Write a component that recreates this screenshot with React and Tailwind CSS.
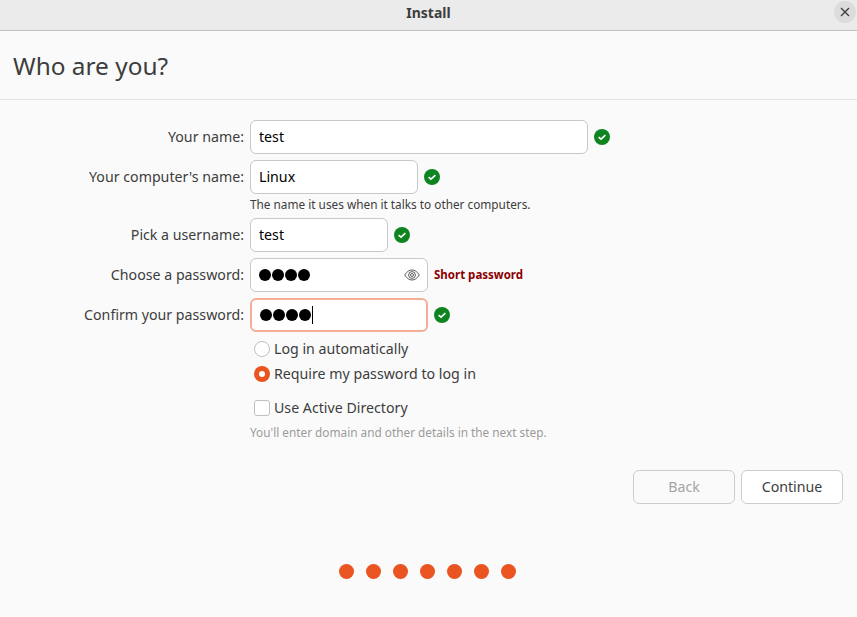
const font = { fontFamily: '"Noto Sans", sans-serif' };

function Check() {
  return (
    <svg width="16" height="16" viewBox="0 0 16 16" className="shrink-0">
      <circle cx="8" cy="8" r="8" fill="#0e8420" />
      <path d="M4.6 8.1 7 10.2 11.4 6.2" fill="none" stroke="#fff" strokeWidth="1.6" />
    </svg>
  );
}

function Dots({ n = 4, caret }) {
  return (
    <span className="flex items-center gap-[1px]">
      {Array.from({ length: n }).map((_, i) => (
        <span key={i} className="w-[12px] h-[12px] rounded-full bg-black" />
      ))}
      {caret && <span className="w-px h-[18px] bg-black" />}
    </span>
  );
}

function Row({ label, width, focused, children, after }) {
  return (
    <div className="flex items-center h-[34px]">
      <div className="w-[244px] text-right text-[14.2px] text-[#3d3d3d] -mt-[1px]">{label}</div>
      <div
        className={
          "ml-[6px] h-[34px] flex items-center justify-between pl-[8px] pr-[15px] rounded-[6px] bg-white text-[14.2px] text-black border " +
          (focused ? "border-2 border-[#f6ad95] pl-[7px]" : "border-[#c8c8c8]") +
          " " + width
        }
      >
        {children}
      </div>
      {after}
    </div>
  );
}

export default function App() {
  return (
    <div className="w-[857px] h-[617px] flex flex-col bg-[#fafafa] overflow-hidden" style={font}>
      <div className="h-[31px] shrink-0 flex items-center justify-center relative bg-[#ebebeb] border-b border-[#c0c0c0]">
        <span className="text-[14px] font-bold text-[#3d3d3d] -mt-[5px]">Install</span>
        <div className="absolute right-[1px] top-[1px] w-[22px] h-[22px] rounded-full bg-[#dcdcdc] flex items-center justify-center">
          <svg width="10" height="10" viewBox="0 0 10 10">
            <path d="M1 1 9 9M9 1 1 9" stroke="#3d3d3d" strokeWidth="1.3" fill="none" />
          </svg>
        </div>
      </div>

      <div className="h-[69px] shrink-0 flex items-center pl-[13px] border-b border-[#e2e2e2]">
        <h1 className="text-[24.4px] font-normal text-[#3d3d3d] mt-[2px]">Who are you?</h1>
      </div>

      <div className="flex flex-col pt-[20px]">
        <div className="flex flex-col gap-[6px]">
          <Row label="Your name:" width="w-[338px]" after={<span className="ml-[6px]"><Check /></span>}>test</Row>
          <div>
            <Row label="Your computer's name:" width="w-[168px]" after={<span className="ml-[6px]"><Check /></span>}>Linux</Row>
            <div className="ml-[250px] mt-[2px] h-[16px] leading-[16px] text-[11.8px] text-[#3d3d3d]">The name it uses when it talks to other computers.</div>
          </div>
          <Row label="Pick a username:" width="w-[138px]" after={<span className="ml-[6px]"><Check /></span>}>test</Row>
          <Row
            label="Choose a password:"
            width="w-[178px]"
            after={<span className="ml-[6px] text-[11.5px] font-bold text-[#8b0000]">Short password</span>}
          >
            <Dots />
            <svg width="16" height="12" viewBox="0 0 16 12" className="-mr-[8px]" fill="none" stroke="#5e5e5e" strokeWidth="1">
              <path d="M.7 6C3 2.4 5.4 1 8 1s5 1.4 7.3 5C13 9.6 10.6 11 8 11S3 9.6.7 6Z" />
              <circle cx="8" cy="6" r="3.4" />
              <circle cx="8" cy="6" r="1.5" />
            </svg>
          </Row>
          <Row label="Confirm your password:" width="w-[178px]" focused after={<span className="ml-[6px]"><Check /></span>}>
            <Dots caret />
          </Row>
        </div>

        <div className="ml-[254px] mt-[9px] flex flex-col text-[14.2px] text-[#3d3d3d]">
          <div className="flex items-center gap-[4px] h-[16px]">
            <span className="w-[16px] h-[16px] rounded-full bg-white border border-[#c0c0c0]" />
            <span>Log in automatically</span>
          </div>
          <div className="flex items-center gap-[4px] h-[16px] mt-[9px]">
            <span className="w-[16px] h-[16px] rounded-full bg-[#e95420] flex items-center justify-center">
              <span className="w-[6px] h-[6px] rounded-full bg-white" />
            </span>
            <span>Require my password to log in</span>
          </div>
          <div className="flex items-center gap-[4px] h-[16px] mt-[18px]">
            <span className="w-[16px] h-[16px] rounded-[3px] bg-white border border-[#c0c0c0]" />
            <span>Use Active Directory</span>
          </div>
        </div>
        <div className="ml-[250px] mt-[8px] h-[16px] leading-[16px] text-[11.8px] text-[#9a9a9a]">You'll enter domain and other details in the next step.</div>

        <div className="flex justify-end gap-[6px] pr-[14px] mt-[30px]">
          <button className="w-[102px] h-[34px] rounded-[6px] border border-[#cdcdcd] bg-[#fafafa] text-[14.2px] text-[#a5a5a5]">Back</button>
          <button className="w-[102px] h-[34px] rounded-[6px] border border-[#cdcdcd] bg-white text-[14.2px] text-[#3d3d3d]">Continue</button>
        </div>

        <div className="flex justify-center gap-[12px] mt-[60px] pr-[2px]">
          {[0, 1, 2, 3, 4, 5, 6].map((i) => (
            <span key={i} className="w-[15px] h-[15px] rounded-full bg-[#e95420]" />
          ))}
        </div>
      </div>
    </div>
  );
}
